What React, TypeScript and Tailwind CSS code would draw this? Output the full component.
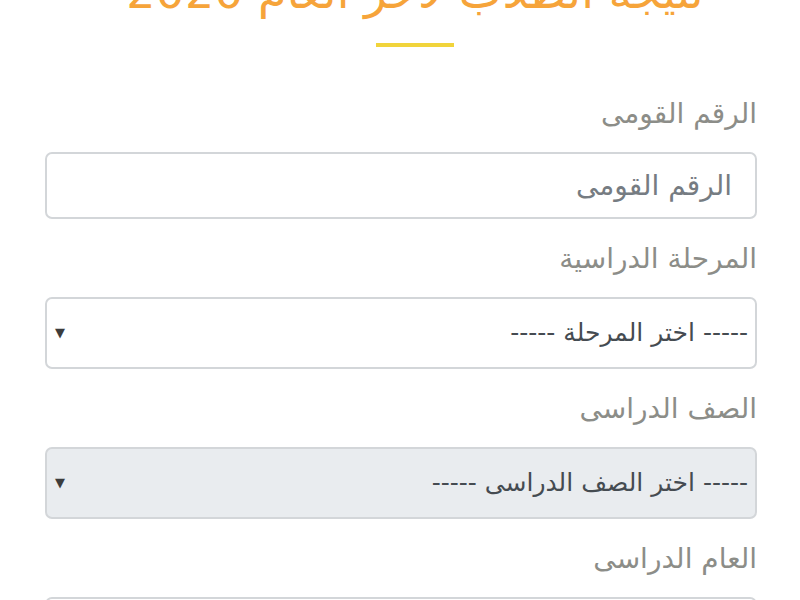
import { ChangeEvent, useState } from "react"

const stages = ["----- اختر المرحلة -----", "المرحلة الابتدائية", "المرحلة الإعدادية", "المرحلة الثانوية"]

function Label({ children }: { children: string }) {
  return (
    <div className="pt-[21px] pb-[19px] text-[28px] leading-[38px] text-[#8c8d88]">
      {children}
    </div>
  )
}

function SelectBox({
  value,
  options,
  disabled,
  onChange,
}: {
  value: string
  options: string[]
  disabled?: boolean
  onChange?: (e: ChangeEvent<HTMLSelectElement>) => void
}) {
  return (
    <div
      className={`relative h-[72px] rounded-[7px] border-2 border-[#d3d6d9] ${
        disabled ? "bg-[#e9ecef]" : "bg-white"
      }`}
    >
      <select
        value={value}
        disabled={disabled}
        onChange={onChange}
        className="h-full w-full appearance-none bg-transparent pr-[7px] pl-10 text-[25px] text-[#454b51] outline-none"
      >
        {options.map((o) => (
          <option key={o}>{o}</option>
        ))}
      </select>
      <span className="pointer-events-none absolute left-[8px] top-1/2 -translate-y-1/2 text-[13px] text-[#3c3c3c]">
        ▼
      </span>
    </div>
  )
}

export default function App() {
  const [stage, setStage] = useState(stages[0])
  const [nationalId, setNationalId] = useState("")

  return (
    <div
      dir="rtl"
      className="min-h-[600px] overflow-hidden bg-white pl-[45px] pr-[43px] font-['DejaVu_Sans',sans-serif]"
    >
      <div className="pl-[28px]">
        <h1 className="-mt-[36px] text-center text-[46px] leading-[56px] text-[#f6a43a]">
          نتيجة الطلاب لآخر العام 2020
        </h1>
        <div className="mx-auto mt-[23px] h-[4px] w-[78px] bg-[#f1d43b]" />
      </div>

      <div className="mt-[27px]">
        <Label>الرقم القومى</Label>
        <input
          value={nationalId}
          onChange={(e) => setNationalId(e.target.value)}
          placeholder="الرقم القومى"
          className="h-[67px] w-full rounded-[7px] border-2 border-[#d3d6d9] bg-white px-[23px] text-[28px] text-[#454b51] outline-none placeholder:text-[#767c82]"
        />

        <Label>المرحلة الدراسية</Label>
        <SelectBox value={stage} options={stages} onChange={(e) => setStage(e.target.value)} />

        <Label>الصف الدراسى</Label>
        <SelectBox value="----- اختر الصف الدراسى -----" options={["----- اختر الصف الدراسى -----"]} disabled />

        <Label>العام الدراسى</Label>
        <SelectBox value="----- اختر العام الدراسى -----" options={["----- اختر العام الدراسى -----"]} />
      </div>
    </div>
  )
}
